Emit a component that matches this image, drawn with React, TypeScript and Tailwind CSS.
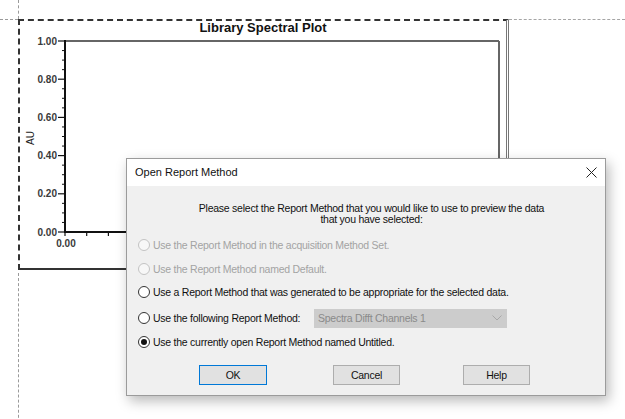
import React from 'react';

const bodyFont = { fontFamily: '"Liberation Sans", Arial, sans-serif' };

function Radio({ checked, disabled }: { checked?: boolean; disabled?: boolean }) {
  return (
    <span
      className={`flex h-[12px] w-[12px] shrink-0 items-center justify-center rounded-full border ${
        disabled ? 'border-[#c3c3c3] bg-[#f7f7f7]' : 'border-[#333] bg-white'
      }`}
    >
      {checked && <span className="h-[6px] w-[6px] rounded-full bg-[#111]" />}
    </span>
  );
}

function Option({ label, checked, disabled, className }: { label: string; checked?: boolean; disabled?: boolean; className: string }) {
  return (
    <div className={`flex h-[20px] items-center gap-[3px] ${className}`}>
      <Radio checked={checked} disabled={disabled} />
      <span className={`whitespace-nowrap ${disabled ? 'text-[#a3a3a3]' : 'text-[#111]'}`}>{label}</span>
    </div>
  );
}

function Chart() {
  // page coordinates, the svg is placed so its viewBox origin equals page (20,41)
  const majors = [1, 0.8, 0.6, 0.4, 0.2, 0];
  const step = 38.2;
  const minor: number[] = [];
  for (let i = 0; i < 5; i++) for (let j = 1; j < 4; j++) minor.push(41 + i * step + (j * step) / 4);
  const xt: number[] = [];
  for (let k = 0; k <= 20; k++) xt.push(65 + k * 21.7);
  return (
    <svg width={486} height={227} viewBox="20 41 486 227" className="overflow-visible">
      <line x1={65} y1={41} x2={499} y2={41} stroke="#666" strokeWidth={2} />
      <line x1={499} y1={41} x2={499} y2={232} stroke="#666" strokeWidth={2} />
      <line x1={65} y1={40} x2={65} y2={233} stroke="#111" strokeWidth={2} />
      <line x1={64} y1={232} x2={499} y2={232} stroke="#111" strokeWidth={2} />
      {majors.map((v, i) => (
        <g key={v}>
          <line x1={58} y1={41 + i * step} x2={65} y2={41 + i * step} stroke="#111" strokeWidth={1.2} />
          <text
            x={57}
            y={41 + i * step}
            textAnchor="end"
            dominantBaseline="central"
            fontSize={10}
            fontWeight={700}
            fill="#3a3a3a"
            fontFamily='"Liberation Sans", Arial, sans-serif'
          >
            {v.toFixed(2)}
          </text>
        </g>
      ))}
      {minor.map(y => (
        <line key={y} x1={62} y1={y} x2={65} y2={y} stroke="#111" strokeWidth={1} />
      ))}
      {xt.map(x => (
        <line key={x} x1={x} y1={232} x2={x} y2={236} stroke="#111" strokeWidth={1.2} />
      ))}
      <text
        x={66}
        y={243}
        textAnchor="middle"
        dominantBaseline="central"
        fontSize={10}
        fontWeight={700}
        fill="#3a3a3a"
        fontFamily='"Liberation Sans", Arial, sans-serif'
      >
        0.00
      </text>
      <text
        x={30}
        y={138}
        textAnchor="middle"
        dominantBaseline="central"
        fontSize={10}
        fill="#222"
        transform="rotate(-90 30 138)"
        fontFamily='"Liberation Sans", Arial, sans-serif'
      >
        AU
      </text>
    </svg>
  );
}

export default function App() {
  return (
    <div className="relative h-[419px] w-[625px] overflow-hidden bg-white" style={{ fontFamily: '"Liberation Sans", Arial, sans-serif' }}>
      {/* top guide */}
      <div className="flex h-[19px]">
        <div className="w-[19px] border-r border-dashed border-[#9a9a9a]" />
      </div>

      <div className="flex items-start">
        <div className="h-[1px] w-[18px] border-t border-dashed border-[#9a9a9a]" />
        {/* plot frame */}
        <div className="flex h-[251px] w-[491px] shrink-0 flex-col border-t-2 border-b-2 border-l-2 border-r-[3px] border-[#333] border-r-[#777] [border-left-style:dashed] [border-right-style:double] [border-top-style:dashed]">
          <div className="h-[20px] text-center text-[13px] leading-[13px] font-bold text-[#111]">Library Spectral Plot</div>
          <Chart />
        </div>
        <div className="h-[1px] flex-1 border-t border-dashed border-[#a5a5a5]" />
      </div>

      <div className="mt-[3px] ml-[18px] h-[160px] border-l border-dashed border-[#9a9a9a]" />

      {/* dialog */}
      <div className="absolute top-[158px] left-[126px] flex h-[238px] w-[480px] flex-col border border-[#9b9b9b] bg-white shadow-[3px_5px_12px_rgba(0,0,0,0.28)]">
        <div className="flex h-[27px] shrink-0 items-center justify-between bg-white pl-[8px] pr-[8px]">
          <span className="text-[11px] text-[#111]">Open Report Method</span>
          <svg width={11} height={11} viewBox="0 0 11 11">
            <line x1={0.5} y1={0.5} x2={10.5} y2={10.5} stroke="#222" strokeWidth={1} />
            <line x1={10.5} y1={0.5} x2={0.5} y2={10.5} stroke="#222" strokeWidth={1} />
          </svg>
        </div>
        <div className="flex flex-1 flex-col bg-[#f0f0f0] pt-[17px] pl-[11px] text-[10.5px] leading-[11px] tracking-[-0.25px]" style={bodyFont}>
          <div className="text-center text-[#111]">
            <div>Please select the Report Method that you would like to use to preview the data</div>
            <div>that you have selected:</div>
          </div>
          <Option className="mt-[10px]" disabled label="Use the Report Method in the acquisition Method Set." />
          <Option className="mt-[4px]" disabled label="Use the Report Method named Default." />
          <Option className="mt-[3px]" label="Use a Report Method that was generated to be appropriate for the selected data." />
          <div className="mt-[6px] flex h-[20px] items-center">
            <div className="flex w-[176px] items-center gap-[3px]">
              <Radio />
              <span className="whitespace-nowrap text-[#111]">Use the following Report Method:</span>
            </div>
            <div className="flex h-[19px] w-[193px] items-center justify-between bg-[#cccccc] pr-[5px] pl-[4px] text-[#8a8a8a]">
              <span>Spectra Difft Channels 1</span>
              <svg width={10} height={6} viewBox="0 0 10 6">
                <polyline points="0.5,0.5 5,5 9.5,0.5" fill="none" stroke="#a8a8a8" strokeWidth={1} />
              </svg>
            </div>
          </div>
          <Option className="mt-[4px]" checked label="Use the currently open Report Method named Untitled." />
          <div className="mt-[13px] flex text-[#111]">
            <button className="ml-[61px] flex h-[20px] w-[68px] items-center justify-center border border-[#0078d7] bg-[#e1e1e1]">OK</button>
            <button className="ml-[66px] flex h-[20px] w-[67px] items-center justify-center border border-[#adadad] bg-[#e1e1e1]">Cancel</button>
            <button className="ml-[63px] flex h-[20px] w-[67px] items-center justify-center border border-[#adadad] bg-[#e1e1e1]">Help</button>
          </div>
        </div>
      </div>
    </div>
  );
}
